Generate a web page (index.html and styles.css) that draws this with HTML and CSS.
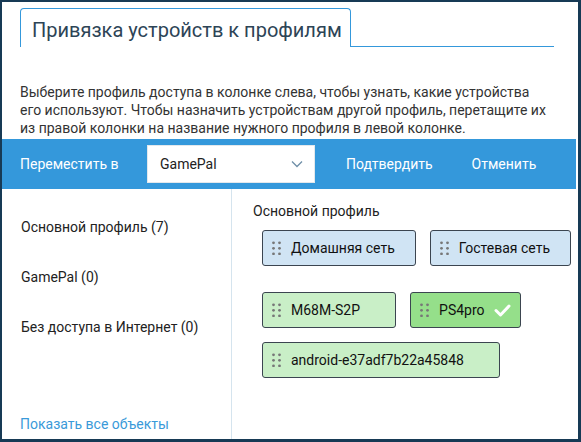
FILE: index.html
```html
<!DOCTYPE html>
<html lang="ru">
<head>
<meta charset="utf-8">
<title>Привязка устройств к профилям</title>
<link rel="stylesheet" href="styles.css">
</head>
<body>
<div class="frame">
  <div class="tabs">
    <div class="tab"><span class="tab-text">Привязка устройств к профилям</span></div>
    <div class="tab-fill"></div>
  </div>
  <p class="desc">Выберите профиль доступа в колонке слева, чтобы узнать, какие устройства его используют. Чтобы назначить устройствам другой профиль, перетащите их из правой колонки на название нужного профиля в левой колонке.</p>
  <div class="bar">
    <span class="bar-label">Переместить в</span>
    <div class="select">
      <span>GamePal</span>
      <svg class="chev" width="12" height="8" viewBox="0 0 12 8"><path d="M1 1.5 L6 6.5 L11 1.5" fill="none" stroke="#6f8fa8" stroke-width="1.3"/></svg>
    </div>
    <span class="bar-btn">Подтвердить</span>
    <span class="bar-btn">Отменить</span>
  </div>
  <div class="main">
    <div class="left">
      <div class="profile">Основной профиль (7)</div>
      <div class="profile">GamePal (0)</div>
      <div class="profile">Без доступа в Интернет (0)</div>
      <a class="show-all">Показать все объекты</a>
    </div>
    <div class="right">
      <div class="group-title">Основной профиль</div>
      <div class="chips nets">
        <div class="chip net"><svg class="grip" width="9" height="14" viewBox="0 0 9 14"><g fill="#777"><circle cx="1.5" cy="1.8" r="1.4"/><circle cx="7.5" cy="1.8" r="1.4"/><circle cx="1.5" cy="7.3" r="1.4"/><circle cx="7.5" cy="7.3" r="1.4"/><circle cx="1.5" cy="12.8" r="1.4"/><circle cx="7.5" cy="12.8" r="1.4"/></g></svg>Домашняя сеть</div>
        <div class="chip net"><svg class="grip" width="9" height="14" viewBox="0 0 9 14"><g fill="#777"><circle cx="1.5" cy="1.8" r="1.4"/><circle cx="7.5" cy="1.8" r="1.4"/><circle cx="1.5" cy="7.3" r="1.4"/><circle cx="7.5" cy="7.3" r="1.4"/><circle cx="1.5" cy="12.8" r="1.4"/><circle cx="7.5" cy="12.8" r="1.4"/></g></svg>Гостевая сеть</div>
      </div>
      <div class="chips devs">
        <div class="chip dev"><svg class="grip" width="9" height="14" viewBox="0 0 9 14"><g fill="#777"><circle cx="1.5" cy="1.8" r="1.4"/><circle cx="7.5" cy="1.8" r="1.4"/><circle cx="1.5" cy="7.3" r="1.4"/><circle cx="7.5" cy="7.3" r="1.4"/><circle cx="1.5" cy="12.8" r="1.4"/><circle cx="7.5" cy="12.8" r="1.4"/></g></svg>M68M-S2P</div>
        <div class="chip dev selected"><svg class="grip" width="9" height="14" viewBox="0 0 9 14"><g fill="#777"><circle cx="1.5" cy="1.8" r="1.4"/><circle cx="7.5" cy="1.8" r="1.4"/><circle cx="1.5" cy="7.3" r="1.4"/><circle cx="7.5" cy="7.3" r="1.4"/><circle cx="1.5" cy="12.8" r="1.4"/><circle cx="7.5" cy="12.8" r="1.4"/></g></svg>PS4pro<svg class="check" width="17" height="13" viewBox="0 0 17 13"><path d="M2 6.5 L6.5 11 L15 2" fill="none" stroke="#fff" stroke-width="3" stroke-linecap="round" stroke-linejoin="round"/></svg></div>
        <div class="chip dev"><svg class="grip" width="9" height="14" viewBox="0 0 9 14"><g fill="#777"><circle cx="1.5" cy="1.8" r="1.4"/><circle cx="7.5" cy="1.8" r="1.4"/><circle cx="1.5" cy="7.3" r="1.4"/><circle cx="7.5" cy="7.3" r="1.4"/><circle cx="1.5" cy="12.8" r="1.4"/><circle cx="7.5" cy="12.8" r="1.4"/></g></svg>android-e37adf7b22a45848</div>
      </div>
    </div>
  </div>
</div>
</body>
</html>
```

FILE: styles.css
```css
* { box-sizing: border-box; }
html, body { margin: 0; height: 442px; }
body {
  background: #173a55;
  padding: 2px 3px 3px 2px;
  font-family: Roboto, "Liberation Sans", sans-serif;
  font-size: 14px;
  color: #222;
}
.frame {
  background: #fff;
  height: 437px;
  display: flex;
  flex-direction: column;
  overflow: hidden;
}
.tabs {
  display: flex;
  margin: 6px 0 0 18px;
  width: 534px;
  height: 39px;
}
.tab {
  width: 331px;
  border: 1px solid #3498db;
  border-bottom: none;
  border-radius: 4px 4px 0 0;
  padding: 8px 0 0 11px;
  white-space: nowrap;
}
.tab-text {
  font-size: 20px;
  line-height: 26px;
  color: #2d4456;
}
.tab-fill {
  flex: 1;
  border-bottom: 1px solid #3498db;
}
.desc {
  margin: 36px 0 0 18px;
  width: 528px;
  line-height: 18px;
  color: #333;
}
.bar {
  margin: 2px 2px 0 0;
  height: 50px;
  background: #3498db;
  display: flex;
  align-items: center;
  color: #fff;
  padding-left: 18px;
}
.bar-label { width: 127px; }
.select {
  width: 168px;
  height: 38px;
  background: #fff;
  border: 1px solid #e3e8ec;
  color: #222;
  display: flex;
  align-items: center;
  justify-content: space-between;
  padding: 0 11px 0 12px;
  margin-right: 31px;
}
.bar-btn { margin-right: 39px; }
.main {
  flex: 1;
  display: flex;
}
.left {
  width: 230px;
  border-right: 1px solid #d5e4ee;
  display: flex;
  flex-direction: column;
  padding: 29px 0 6px 19px;
}
.profile {
  line-height: 18px;
  margin-bottom: 32px;
}
.show-all {
  margin-top: auto;
  margin-left: -1px;
  line-height: 18px;
  color: #3a9ad9;
}
.right {
  flex: 1;
  padding: 13px 0 0 21px;
}
.group-title {
  line-height: 18px;
  margin-bottom: 10px;
}
.chips {
  display: flex;
  flex-wrap: wrap;
  gap: 14px 14px;
  padding-left: 9px;
}
.devs { margin-top: 26px; }
.chip {
  position: relative;
  height: 36px;
  display: flex;
  align-items: center;
  border: 1px solid #3b4550;
  border-radius: 3px;
  padding: 0 20px 0 9px;
  color: #111;
}
.grip { margin-right: 10px; flex: none; }
.net { background: #d0e4f4; }
.dev { background: #c9efc7; padding-right: 35px; }
.dev.selected { background: #95df8a; }
.check {
  position: absolute;
  right: 9px;
  top: 11px;
}
```
